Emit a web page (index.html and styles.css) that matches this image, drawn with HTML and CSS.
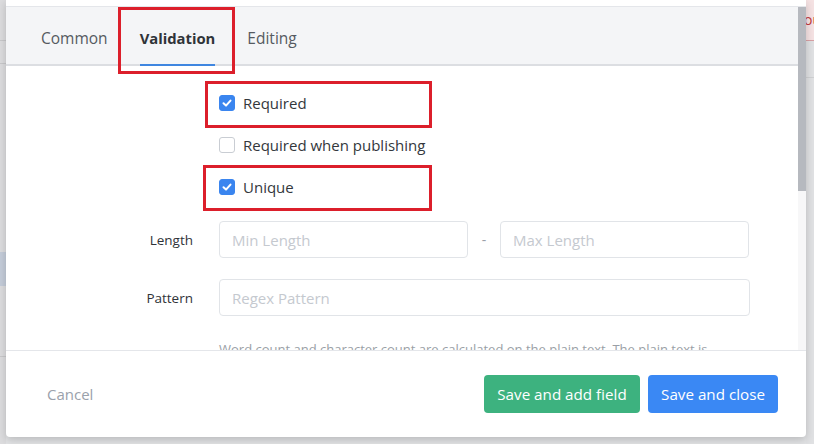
FILE: index.html
```html
<!DOCTYPE html>
<html>
<head>
<meta charset="utf-8">
<link rel="stylesheet" href="styles.css">
</head>
<body>
<div class="page">
  <div class="left-strip">
    <div class="ls-line l1"></div>
    <div class="ls-line l2"></div>
    <div class="ls-blue"></div>
    <div class="ls-line l3"></div>
  </div>
  <div class="modal">
    <div class="modal-top"></div>
    <div class="scroll-area">
      <div class="scroll-content">
        <div class="tabs">
          <div class="tab">Common</div>
          <div class="tab active">Validation</div>
          <div class="tab">Editing</div>
        </div>
        <div class="form">
          <div class="check-row">
            <span class="box checked"><svg viewBox="0 0 16 16" width="16" height="16"><path d="M4.5 8.3 L7 10.6 L11.5 5.6" fill="none" stroke="#fff" stroke-width="2" stroke-linecap="round" stroke-linejoin="round"/></svg></span>
            <span class="check-label">Required</span>
          </div>
          <div class="check-row">
            <span class="box"></span>
            <span class="check-label">Required when publishing</span>
          </div>
          <div class="check-row">
            <span class="box checked"><svg viewBox="0 0 16 16" width="16" height="16"><path d="M4.5 8.3 L7 10.6 L11.5 5.6" fill="none" stroke="#fff" stroke-width="2" stroke-linecap="round" stroke-linejoin="round"/></svg></span>
            <span class="check-label">Unique</span>
          </div>
          <div class="field-row length-row">
            <label class="field-label">Length</label>
            <div class="range">
              <input class="input" placeholder="Min Length">
              <span class="dash">-</span>
              <input class="input" placeholder="Max Length">
            </div>
          </div>
          <div class="field-row pattern-row">
            <label class="field-label">Pattern</label>
            <input class="input wide" placeholder="Regex Pattern">
          </div>
          <div class="help">Word count and character count are calculated on the plain text. The plain text is</div>
        </div>
      </div>
      <div class="scrollbar">
        <div class="thumb"></div>
      </div>
    </div>
    <div class="footer">
      <span class="cancel">Cancel</span>
      <div class="actions">
        <button class="btn green">Save and add field</button>
        <button class="btn blue">Save and close</button>
      </div>
    </div>
    <div class="mark mark-tab"></div>
    <div class="mark mark-required"></div>
    <div class="mark mark-unique"></div>
  </div>
  <div class="right-strip">
    <div class="alert">ou</div>
    <div class="rs-line"></div>
  </div>
</div>
</body>
</html>
```

FILE: styles.css
```css
* { box-sizing: border-box; }
html, body {
  margin: 0;
  padding: 0;
  width: 814px;
  height: 444px;
  overflow: hidden;
  background: #e2e3e5;
  font-family: "Open Sans", "Noto Sans", sans-serif;
}
.page {
  display: flex;
  width: 814px;
  height: 444px;
}
.left-strip {
  width: 6px;
  flex: none;
  display: flex;
  flex-direction: column;
  background: #dcdcde;
}
.ls-line { height: 1px; background: #c8c8ca; }
.l1 { margin-top: 40px; }
.l2 { margin-top: 22px; }
.ls-blue { margin-top: 188px; height: 34px; background: #c4ccd9; }
.l3 { margin-top: 70px; }

.modal {
  position: relative;
  width: 800px;
  height: 437px;
  flex: none;
  background: #fff;
  border-radius: 0 0 4px 4px;
  box-shadow: 0 3px 8px rgba(0,0,0,0.18);
  display: flex;
  flex-direction: column;
}
.modal-top {
  height: 7px;
  border-bottom: 1px solid #e4e6ea;
  flex: none;
}
.scroll-area {
  display: flex;
  height: 343px;
  flex: none;
  overflow: hidden;
}
.scroll-content {
  flex: 1;
  overflow: hidden;
}
.scrollbar {
  width: 8px;
  flex: none;
  background: #f7f7f8;
}
.thumb {
  height: 184px;
  background: #b6b9bf;
}
.tabs {
  height: 59px;
  background: #f4f5f7;
  border-bottom: 2px solid #dcdee2;
  display: flex;
  padding-left: 35px;
}
.tab {
  position: relative;
  height: 57px;
  padding: 6px 16px 0 0;
  margin-right: 16px;
  font-size: 15.5px;
  line-height: 51px;
  color: #555a61;
}
.tab.active {
  font-weight: 700;
  font-size: 14.8px;
  color: #2f3338;
  padding-right: 0;
  margin-right: 32px;
}
.tab.active::after {
  content: "";
  position: absolute;
  left: 0;
  right: 0;
  bottom: -2px;
  height: 2px;
  background: #3f86e0;
}
.form {
  padding: 16px 0 0 0;
}
.check-row {
  height: 42px;
  display: flex;
  align-items: center;
  padding-left: 213px;
}
.box {
  width: 16px;
  height: 16px;
  border: 1px solid #c9cdd3;
  border-radius: 3px;
  background: #fff;
  display: flex;
  margin-right: 8px;
}
.box.checked {
  background: #3a85ef;
  border-color: #3a85ef;
}
.box svg { margin: -1px; }
.check-label {
  font-size: 15px;
  color: #33373c;
}
.field-row {
  display: flex;
  align-items: center;
}
.length-row { margin-top: 13px; }
.pattern-row { margin-top: 21px; }
.field-label {
  width: 187px;
  text-align: right;
  font-size: 13.5px;
  color: #2f3338;
  margin-right: 26px;
}
.range {
  display: flex;
  align-items: center;
}
.input {
  width: 249px;
  height: 37px;
  border: 1px solid #e1e4e8;
  border-radius: 4px;
  padding: 0 12px;
  font-family: "Open Sans", "Noto Sans", sans-serif;
  font-size: 15px;
  color: #333;
  outline: none;
}
.input::placeholder { color: #c5c9cf; }
.input.wide { width: 531px; }
.dash {
  width: 32px;
  text-align: center;
  color: #9aa0a8;
  font-size: 14px;
}
.help {
  margin-top: 24px;
  padding-left: 213px;
  font-size: 13px;
  line-height: 18px;
  color: #9a9fa6;
  white-space: nowrap;
}
.footer {
  flex: 1;
  border-top: 1px solid #e4e6ea;
  display: flex;
  align-items: center;
  justify-content: space-between;
  padding: 0 28px 0 41px;
}
.cancel {
  font-size: 15px;
  color: #9aa1ab;
}
.actions {
  display: flex;
  gap: 8px;
}
.btn {
  height: 38px;
  border: none;
  border-radius: 4px;
  color: #fff;
  font-family: "Open Sans", "Noto Sans", sans-serif;
  font-size: 15.2px;
  padding: 0 10px;
}
.btn.green { background: #3db27f; width: 156px; }
.btn.blue { background: #3a88f4; width: 130px; }

.mark {
  position: absolute;
  border: 3px solid #dc1f2b;
  pointer-events: none;
}
.mark-tab { left: 112px; top: 7px; width: 117px; height: 67px; }
.mark-required { left: 199px; top: 81px; width: 227px; height: 47px; }
.mark-unique { left: 197px; top: 165px; width: 229px; height: 46px; }

.right-strip {
  flex: 1;
  background: #e0e1e3;
  display: flex;
  flex-direction: column;
}
.alert {
  height: 41px;
  background: #f5e2e3;
  border-bottom: 1px solid #d9a0a4;
  color: #c0393f;
  font-size: 14px;
  line-height: 40px;
  overflow: hidden;
  white-space: nowrap;
  text-indent: -2px;
}
.rs-line { margin-top: 36px; height: 1px; background: #cfd0d2; }
```
